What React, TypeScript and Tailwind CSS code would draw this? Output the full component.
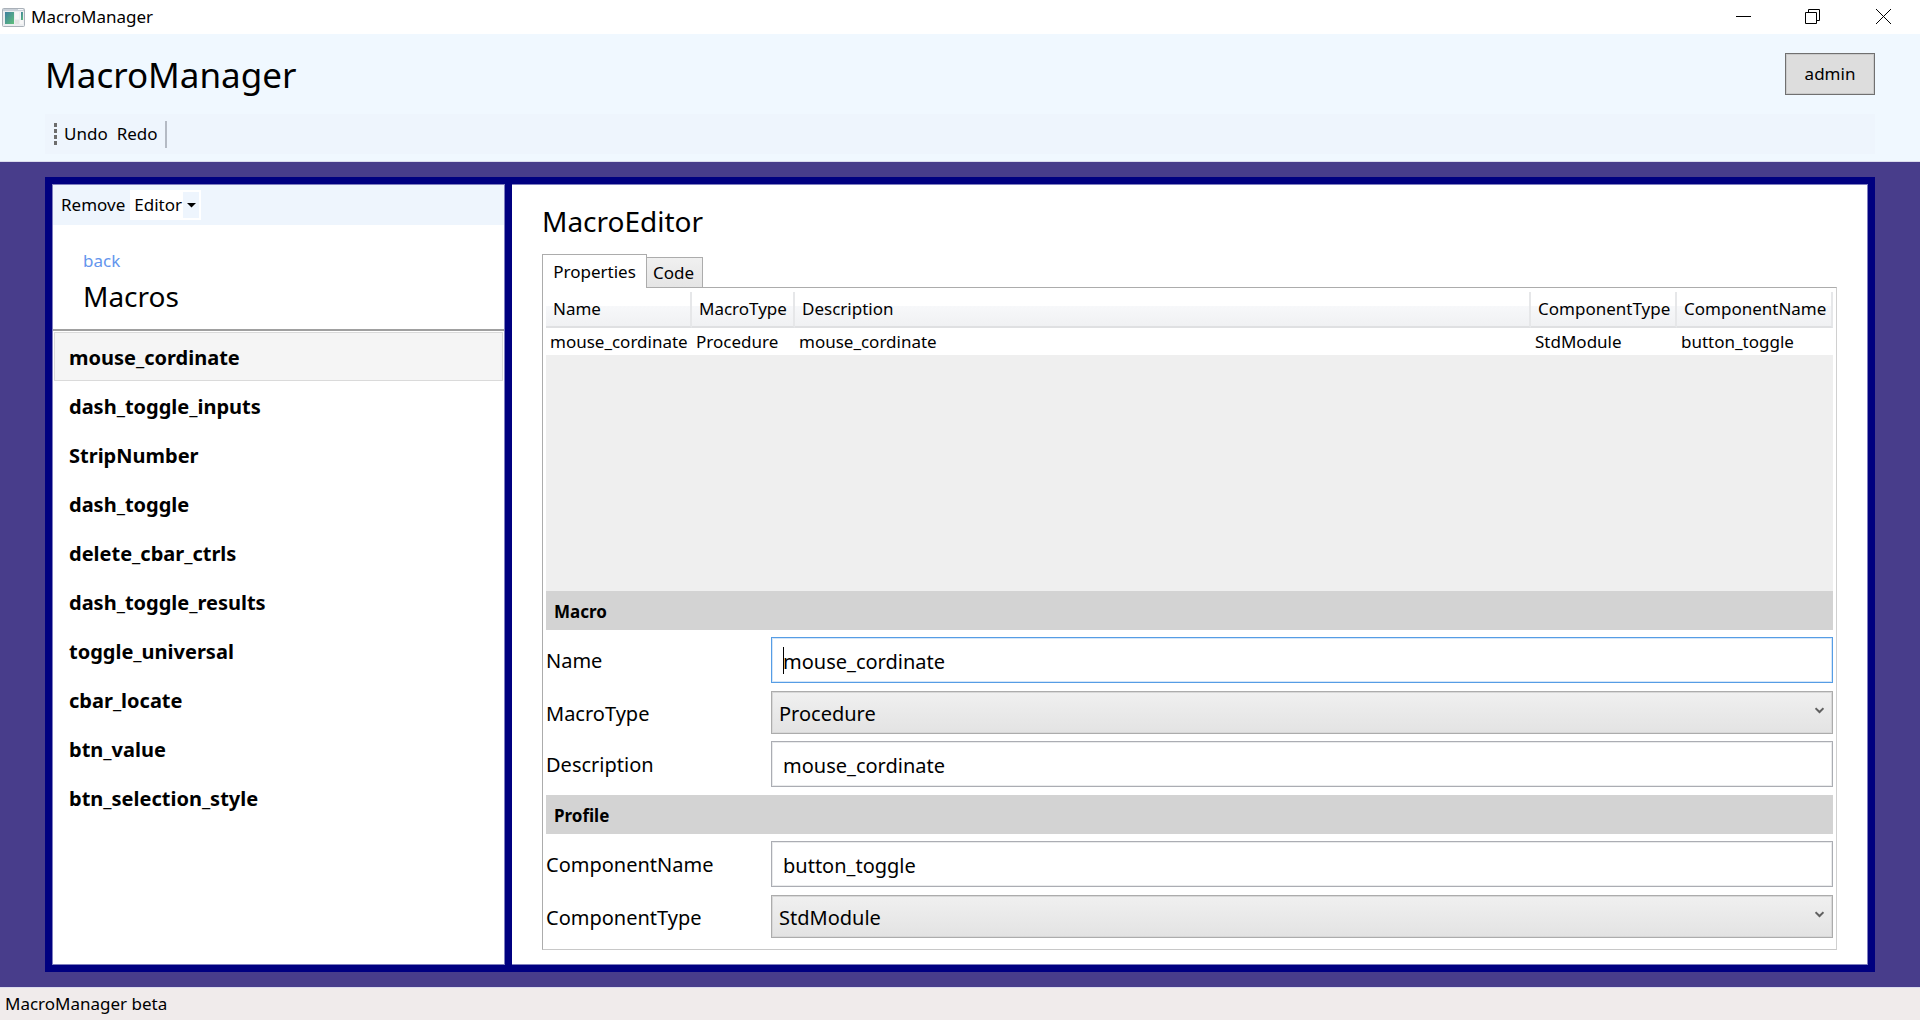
import { useState, type ReactNode } from "react";

const macros = [
  "mouse_cordinate",
  "dash_toggle_inputs",
  "StripNumber",
  "dash_toggle",
  "delete_cbar_ctrls",
  "dash_toggle_results",
  "toggle_universal",
  "cbar_locate",
  "btn_value",
  "btn_selection_style",
];

function AppIcon() {
  return (
    <svg width="23" height="19" viewBox="0 0 23 19" aria-hidden="true">
      <defs>
        <linearGradient id="pane" x1="0" y1="0" x2="1" y2="1">
          <stop offset="0" stopColor="#3f7fa0" />
          <stop offset="1" stopColor="#5fc07a" />
        </linearGradient>
      </defs>
      <rect x="0.5" y="0.5" width="22" height="18" rx="1" fill="#eceef0" stroke="#a9b0b8" />
      <rect x="1" y="1" width="21" height="2" fill="#c9d0d8" />
      <rect x="16" y="1" width="5" height="1" fill="#f4f6f8" />
      <rect x="3" y="4" width="9" height="12" fill="url(#pane)" />
      <rect x="13" y="4" width="4" height="7" fill="#f6f6f6" />
      <rect x="13" y="12" width="4" height="4" fill="#e4e4e4" />
      <rect x="18" y="4" width="3" height="7" fill="#f6f6f6" />
      <rect x="19" y="4" width="2" height="8" fill="url(#pane)" />
      <rect x="18" y="12" width="3" height="4" fill="#f6f6f6" />
    </svg>
  );
}

function TitleBar() {
  return (
    <div className="flex h-[34px] shrink-0 items-center justify-between bg-white pl-0.5">
      <div className="flex items-center gap-1.5">
        <AppIcon />
        <span className="text-[17px] leading-6">MacroManager</span>
      </div>
      <div className="flex h-full">
        <button aria-label="Minimize" className="flex w-[69px] items-center justify-center">
          <svg width="15" height="16" viewBox="0 0 15 16">
            <path d="M0 7.500H15" stroke="black" />
          </svg>
        </button>
        <button aria-label="Restore" className="flex w-[69px] items-center justify-center">
          <svg width="15" height="16" viewBox="0 0 15 16" fill="none" stroke="black">
            <path d="M0.500 3.500H11.500V14.500H0.500ZM3.500 3.500V0.500H14.500V11.500H11.500" />
          </svg>
        </button>
        <button aria-label="Close" className="flex w-[73px] items-center justify-center">
          <svg width="15" height="16" viewBox="0 0 15 16" stroke="black">
            <path d="M0 0L15 15M15 0L0 15" />
          </svg>
        </button>
      </div>
    </div>
  );
}

function Header() {
  return (
    <header className="flex shrink-0 flex-col border-b border-[#dcdcee] bg-[#f0f8ff] px-[45px] pb-[7px]">
      <div className="flex h-20 items-center justify-between">
        <h1 className="pt-0.5 text-[35px] leading-[48px]">MacroManager</h1>
        <button className="h-[42px] w-[90px] border border-[#707070] bg-[#dddddd] text-[17px] shadow-[inset_0_0_0_1px_#cacaca]">
          admin
        </button>
      </div>
      <div className="flex h-10 items-center bg-[#eef5fd] pl-[9px] text-[17px]">
        <svg width="3" height="22" viewBox="0 0 3 22" aria-hidden="true" fill="#6d6d6d">
          <rect width="3" height="4" />
          <rect y="6" width="3" height="4" />
          <rect y="12" width="3" height="4" />
          <rect y="18" width="3" height="4" />
        </svg>
        <button className="ml-[7px]">Undo</button>
        <button className="ml-[9px]">Redo</button>
        <span className="ml-[7px] h-[27px] w-0.5 bg-[#b4bac4]" />
      </div>
    </header>
  );
}

function Sidebar() {
  const [selected, setSelected] = useState(macros[0]);
  return (
    <aside className="flex w-[453px] shrink-0 flex-col border border-[#7f7fbf] bg-white">
      <div className="flex h-10 shrink-0 items-center bg-[#eef5fd] pl-2 text-[17px]">
        <button>Remove</button>
        <div className="relative ml-[5px] h-[30px] w-[71px]">
          <select
            aria-label="Editor"
            className="h-full w-full appearance-none bg-white pl-1 outline-none"
          >
            <option>Editor</option>
          </select>
          <span className="pointer-events-none absolute top-0.5 right-0.5 flex h-[26px] w-4 items-center justify-center bg-[#eef5fd]">
            <svg width="9" height="5" viewBox="0 0 9 5">
              <path d="M0 0H9L4.500 4.500Z" fill="black" />
            </svg>
          </span>
        </div>
      </div>
      <div className="flex h-[106px] shrink-0 flex-col items-start border-b-2 border-[#a0a0a0] pt-6 pl-[30px]">
        <a href="#back" className="text-[17px] leading-6 text-[#6495ed]">
          back
        </a>
        <h2 className="mt-[3px] text-[28px] leading-10">Macros</h2>
      </div>
      <ul className="p-px">
        {macros.map((name) => (
          <li key={name}>
            <button
              onClick={() => setSelected(name)}
              className={`block h-[49px] w-full border pt-0.5 pl-3.5 text-left text-[20px] leading-7 font-bold ${
                name === selected ? "border-[#dadada] bg-[#f5f5f5]" : "border-transparent"
              }`}
            >
              {name}
            </button>
          </li>
        ))}
      </ul>
    </aside>
  );
}

const headCell =
  "h-9 border-r-2 border-b-2 border-r-[#e6e7e9] border-b-[#dfe0e2] bg-[linear-gradient(#ffffff_0%,#ffffff_40%,#f7f8fa_41%,#f0f1f3_100%)] p-0 pl-[7px] text-left font-normal";

function MacroTable() {
  return (
    <table className="w-full table-fixed border-separate border-spacing-0 text-[17px]">
      <colgroup>
        <col className="w-[146px]" />
        <col className="w-[103px]" />
        <col />
        <col className="w-[146px]" />
        <col className="w-[156px]" />
      </colgroup>
      <thead>
        <tr>
          <th className={headCell}>Name</th>
          <th className={headCell}>MacroType</th>
          <th className={headCell}>Description</th>
          <th className={headCell}>ComponentType</th>
          <th className={headCell}>ComponentName</th>
        </tr>
      </thead>
      <tbody>
        <tr className="h-[27px] bg-white leading-6 whitespace-nowrap">
          <td className="pl-1">mouse_cordinate</td>
          <td className="pl-1">Procedure</td>
          <td className="pl-1">mouse_cordinate</td>
          <td className="pl-1">StdModule</td>
          <td className="pl-1">button_toggle</td>
        </tr>
      </tbody>
    </table>
  );
}

function Section({ children }: { children: ReactNode }) {
  return (
    <h3 className="flex h-[39px] shrink-0 items-center bg-[#d3d3d3] pt-0.5 pl-2 text-[17px] font-bold">{children}</h3>
  );
}

function TextField({ id, label, value, active }: { id: string; label: string; value: string; active?: boolean }) {
  return (
    <div className="mt-[7px] mb-2 flex shrink-0 items-center text-[20px]">
      <label htmlFor={id} className="w-[225px] shrink-0 pt-0.5">
        {label}
      </label>
      <div className="relative flex-1">
        <input
          id={id}
          defaultValue={value}
          className={`block h-[46px] w-full border bg-white pt-0.5 pl-[11px] outline-none ${
            active
              ? "border-[#569de5] shadow-[inset_0_0_0_1px_#d5e6f8]"
              : "border-[#abadb3] shadow-[inset_0_0_0_1px_#eaebec]"
          }`}
        />
        {active && <span className="absolute top-2.5 left-3 h-[27px] w-px bg-black" />}
      </div>
    </div>
  );
}

function SelectField({ id, label, value }: { id: string; label: string; value: string }) {
  return (
    <div className="flex shrink-0 items-center text-[20px]">
      <label htmlFor={id} className="w-[225px] shrink-0 pt-0.5">
        {label}
      </label>
      <div className="relative flex-1">
        <select
          id={id}
          className="block h-[43px] w-full appearance-none border border-[#acacac] bg-linear-to-b from-[#f0f0f0] to-[#e3e3e3] pt-0.5 pl-[7px] shadow-[inset_0_0_0_1px_#d8d8d8] outline-none"
        >
          <option>{value}</option>
        </select>
        <svg
          className="pointer-events-none absolute top-4 right-[9px]"
          width="9"
          height="7"
          viewBox="0 0 9 7"
          fill="none"
          stroke="#606060"
          strokeWidth="2"
        >
          <path d="M0.500 1.200L4.500 5L8.500 1.200" />
        </svg>
      </div>
    </div>
  );
}

function Editor() {
  return (
    <main className="flex min-w-0 flex-1 flex-col border-t border-r border-b border-[#7f7fbf] bg-white pr-[30px] pb-3.5 pl-[30px]">
      <h2 className="mt-4 text-[28px] leading-10">MacroEditor</h2>
      <div role="tablist" className="mt-3 flex h-[34px] shrink-0 items-end text-[17px]">
        <button
          role="tab"
          aria-selected="true"
          className="relative z-10 -mb-px h-[34px] w-[105px] border border-b-0 border-[#acacac] bg-white"
        >
          Properties
        </button>
        <button
          role="tab"
          aria-selected="false"
          className="h-[30px] w-14 border border-b-0 border-l-0 border-[#acacac] bg-linear-to-b from-[#f0f0f0] to-[#e5e5e5] pr-0.5"
        >
          Code
        </button>
      </div>
      <div className="flex flex-1 flex-col border border-[#acacac] border-r-[#d0d0d0] border-b-[#c8c8c8] px-[3px] pt-1 pb-[11px]">
        <div className="flex-1 bg-[#efefef]">
          <MacroTable />
        </div>
        <Section>Macro</Section>
        <TextField id="name" label="Name" value="mouse_cordinate" active />
        <SelectField id="macro-type" label="MacroType" value="Procedure" />
        <TextField id="description" label="Description" value="mouse_cordinate" />
        <Section>Profile</Section>
        <TextField id="component-name" label="ComponentName" value="button_toggle" />
        <SelectField id="component-type" label="ComponentType" value="StdModule" />
      </div>
    </main>
  );
}

export default function App() {
  return (
    <div className="flex min-h-screen flex-col bg-[#483d8b] font-['Noto_Sans',sans-serif] text-black">
      <TitleBar />
      <Header />
      <div className="flex flex-1 px-[45px] py-[15px]">
        <div className="flex flex-1 border-7 border-[#000080] bg-[#000080]">
          <Sidebar />
          <div className="w-[7px] shrink-0 bg-[#000080]" />
          <Editor />
        </div>
      </div>
      <footer className="flex h-[33px] shrink-0 items-center border-t border-[#dcdcee] bg-[#f0ebeb] pl-[5px] text-[17px]">
        MacroManager beta
      </footer>
    </div>
  );
}
